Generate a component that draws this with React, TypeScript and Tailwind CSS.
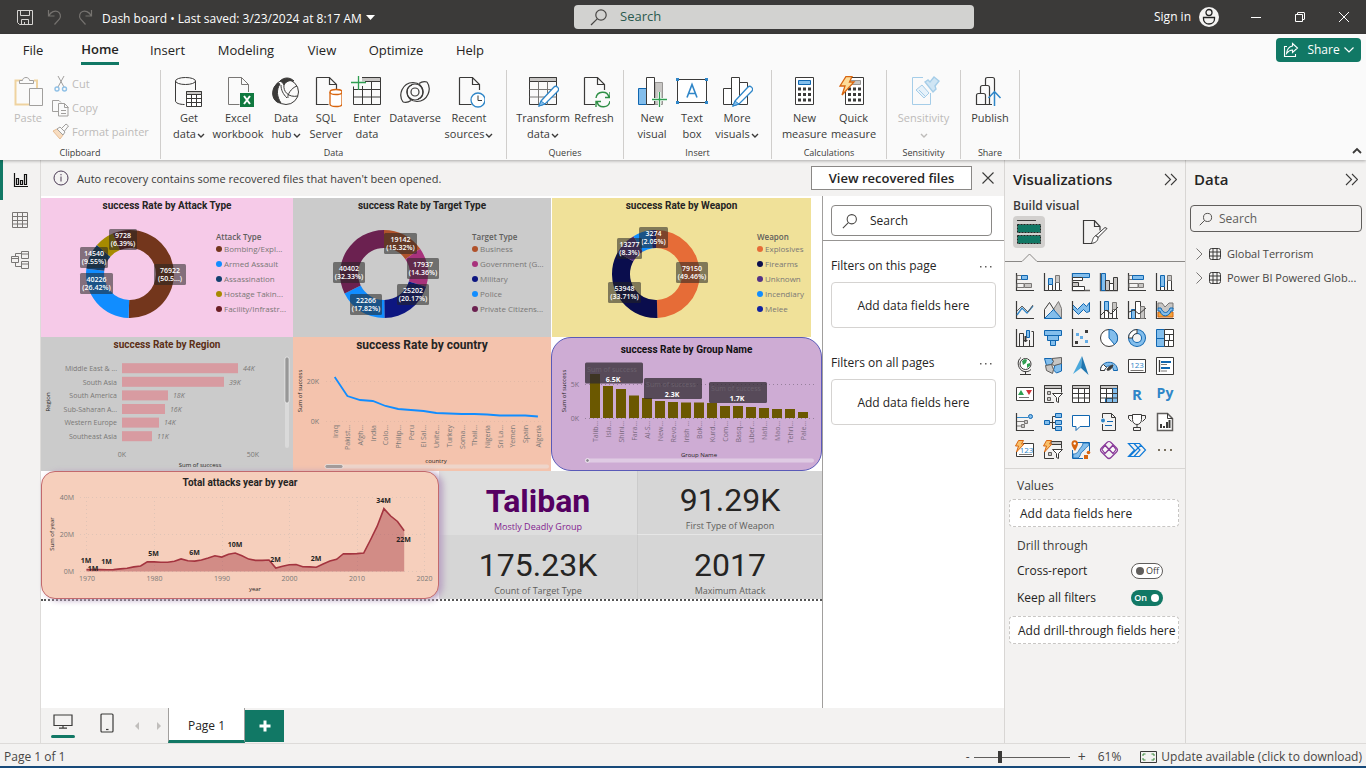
import React from "react";

type Node = React.ReactNode;

const K = "#3b3a39";
const B = "#1066b0";
const L = "#83beec";
const G = "#c8c6c4";
const TEAL = "#117865";

function Icon({ size = 20, box = 20, label, children }: { size?: number; box?: number; label?: string; children: Node }) {
  return (
    <svg width={size} height={size} viewBox={`0 0 ${box} ${box}`} fill="none" stroke={K} className="shrink-0" aria-label={label} aria-hidden={label ? undefined : true}>
      {children}
    </svg>
  );
}

function Magnifier({ size = 18 }: { size?: number }) {
  return (
    <svg width={size} height={size} viewBox="0 0 18 18" fill="none" stroke="#484644" strokeWidth="1.2" className="shrink-0" aria-hidden>
      <circle cx="11" cy="7" r="5.2" />
      <path d="M7.2 10.8L1 17" />
    </svg>
  );
}

function Chevron() {
  return (
    <svg width="8" height="8" viewBox="0 0 8 8" fill="none" stroke="currentColor" strokeWidth="1.4" className="ml-px inline" aria-hidden>
      <path d="M1 3l3 3 3-3" />
    </svg>
  );
}

/* ---------- title bar ---------- */

function TitleBar() {
  return (
    <header className="flex h-[34px] items-center bg-[#3b3a39] text-xs text-white">
      <div className="flex flex-[574_1_0%] items-center">
        <button aria-label="Save" className="mr-3 ml-4">
          <svg width="18" height="18" viewBox="0 0 18 18" fill="none" stroke="#d6d4d2">
            <path d="M1.5 2.5h15v14h-13l-2-2z M4.5 2.5v5h9v-5 M5.5 16.5v-5h7v5 M8.5 14v2" />
          </svg>
        </button>
        <button aria-label="Undo" className="mr-3">
          <svg width="18" height="18" viewBox="0 0 18 18" fill="none" stroke="#75726f" strokeWidth="1.2">
            <path d="M2.5 2v6h6 M3 7.5c2-4 6-5 8.5-4s4 4.500 2 7.5L8.5 16.5" />
          </svg>
        </button>
        <button aria-label="Redo" className="mr-2">
          <svg width="18" height="18" viewBox="0 0 18 18" fill="none" stroke="#75726f" strokeWidth="1.2">
            <path d="M15.5 2v6h-6 M15 7.5c-2-4-6-5-8.5-4s-4 4.5-2 7.5l5 5.5" />
          </svg>
        </button>
        <button className="flex items-center gap-1 pt-1 whitespace-nowrap">
          Dash board • Last saved: 3/23/2024 at 8:17 AM
          <svg width="9" height="5" viewBox="0 0 9 5" fill="#fff" className="mb-1" aria-hidden>
            <path d="M0 0h9L4.5 5z" />
          </svg>
        </button>
      </div>
      <label className="flex h-6 w-[400px] items-center gap-3 rounded-sm bg-[#d2d2d0] px-4">
        <Magnifier />
        <input aria-label="Search" placeholder="Search" className="min-w-0 flex-1 bg-transparent text-[13px] text-[#2a5a4e] outline-none placeholder:text-[#2a5a4e]" />
      </label>
      <div className="flex flex-[392_1_0%] items-center justify-end">
        <button className="flex items-center gap-2">
          Sign in
          <svg width="20" height="20" viewBox="0 0 20 20" aria-hidden>
            <circle cx="10" cy="10" r="10" fill="#f3f2f1" />
            <circle cx="10" cy="5.5" r="3" fill="none" stroke="#222" strokeWidth="1.3" />
            <path d="M4.5 10.5h11v1.5c0 3-2.500 5-5.5 5s-5.5-2-5.5-5z" fill="none" stroke="#222" strokeWidth="1.3" />
          </svg>
        </button>
        <button aria-label="Minimize" className="ml-8">
          <svg width="10" height="10" viewBox="0 0 10 10" stroke="#fff"><path d="M0 5.5h10" /></svg>
        </button>
        <button aria-label="Restore" className="ml-[34px]">
          <svg width="10" height="10" viewBox="0 0 10 10" stroke="#fff" fill="none"><path d="M.5 2.5h7v7h-7z M2.5 2.5V1q0-.5.5-.5h6q.5 0 .5.5v6q0 .5-.5.5H7.5" /></svg>
        </button>
        <button aria-label="Close" className="mr-[17px] ml-[34px]">
          <svg width="10" height="10" viewBox="0 0 10 10" stroke="#fff"><path d="M0 0l10 10 M10 0L0 10" /></svg>
        </button>
      </div>
    </header>
  );
}

/* ---------- ribbon ---------- */

function MenuTabs() {
  const tab = "flex h-[31px] items-center justify-center pt-0.5 text-[13px] text-[#252423]";
  return (
    <div className="flex h-9 items-start">
      <button className={`${tab} w-[66px]`}>File</button>
      <button className={`${tab} w-[68px] font-semibold`}>
        <span className="flex h-full items-center border-b-[3px] border-[#117865] pt-0.5">Home</span>
      </button>
      <button className={`${tab} w-[67px]`}>Insert</button>
      <button className={`${tab} w-[90px]`}>Modeling</button>
      <button className={`${tab} w-[62px]`}>View</button>
      <button className={`${tab} w-[86px]`}>Optimize</button>
      <button className={`${tab} w-[62px]`}>Help</button>
      <button className="mt-1 mr-[5px] ml-auto flex h-6 w-[85px] items-center justify-center gap-1 rounded bg-[#117865] text-xs text-white">
        <svg width="16" height="16" viewBox="0 0 16 16" fill="none" stroke="#fff" strokeWidth="1.1" className="mr-1" aria-hidden>
          <path d="M4 4.500H1.500v10h11V12" />
          <path d="M9.500 1.500l5 4.500-5 4.500V8C6.500 8 5 9.500 3.500 11.500 4 7 6.500 4.500 9.500 4z" />
        </svg>
        Share
        <svg width="10" height="6" viewBox="0 0 10 6" fill="none" stroke="#fff" strokeWidth="1.2" aria-hidden><path d="M.5.5L5 5 9.500.5" /></svg>
      </button>
    </div>
  );
}

const page = "M6.500 1.500h13l7 7V14 M19.500 1.500v7h7 M6.500 1.500v27h12";
const ribbonIcons: Record<string, Node> = {
  get: (
    <>
      <ellipse cx="12.500" cy="5" rx="10" ry="3.500" />
      <path d="M2.500 5v20c0 2 4 3.500 9 3.500 M22.500 5v9" />
      <path d="M13.500 15.500h15v15h-15z" fill="#fff" />
      <path d="M13.500 15.500h15v3h-15z" fill={G} />
      <path d="M13.500 22.500h15 M13.500 26.500h15 M18.500 18.500v12 M23.500 18.500v12" />
    </>
  ),
  excel: (
    <>
      <path d="M6.500 1.500h13l7 7V16 M19.500 1.500v7h7 M6.500 1.500v27h11" stroke="#797775" />
      <path d="M18 17h14v14H18z" fill="#10793f" stroke="none" />
      <path d="M22 20l6 8 M28 20l-6 8" stroke="#fff" strokeWidth="2" />
    </>
  ),
  hub: (
    <>
      <circle cx="16" cy="16" r="12.500" />
      <path d="M10 5c4-4 10-4 14 0-4-1-8 0-10 4-1-2-2-3-4-4z M8 7C1 12 1 22 7 26c2 1 3 1 4 1C7 21 6 14 10 8z" fill={K} />
      <path d="M14 9c-1 6 4 13 14 11 M27 10c-6 2-10 9-9 12 M11 9c0 5 2 9 6 13" />
    </>
  ),
  sql: (
    <>
      <path d={page} strokeWidth="1.2" />
      <path d="M20 16v12c0 1.500 3 2.500 6 2.500s6-1 6-2.500V16" fill="#fff" stroke="#d8650f" strokeWidth="1.300" />
      <ellipse cx="26" cy="16" rx="6" ry="2.500" fill="#fff" stroke="#d8650f" strokeWidth="1.300" />
    </>
  ),
  enter: (
    <>
      <path d="M11 1.500h18.500v4H11z" fill={G} stroke="none" />
      <path d="M11 1.500h18.500v27h-27V10.500 M14 5.500h15.500 M2.500 13.500h27 M2.500 21h27 M11.500 10v18.500 M20.500 5.500v23" />
      <path d="M7.500 0v14 M0 6.500h15" stroke="#2f9e51" strokeWidth="1.300" />
    </>
  ),
  dataverse: (
    <g strokeWidth="1.200">
      <circle cx="16" cy="16" r="4" />
      <path d="M4 26C-1 19 3 7 14 6.500c6 0 10 4 10 9.500 0 5-4 8-8 8-5 0-8-4-8-8 0-3 2-6 5-7" />
      <path d="M28 6C33 13 29 25 18 25.500c-6 0-10-4-10-9.500 0-5 4-8 8-8 5 0 8 4 8 8 0 3-2 6-5 7" />
      <path d="M4 26c3 1 6 0 8-1.500 M28 6c-3-1-6 0-8 1.500" />
    </g>
  ),
  recent: (
    <>
      <path d={page} strokeWidth="1.200" />
      <circle cx="25" cy="24" r="7" fill="#fff" stroke="#2f86c8" strokeWidth="1.300" />
      <path d="M25 19.500V24.500h4" />
    </>
  ),
  transform: (
    <>
      <path d="M2.500 1.500h27v27h-27z" />
      <path d="M2.500 1.500h27v4h-27z" fill={G} />
      <path d="M2.500 13.500h27 M2.500 21h27 M11.500 5.500v23 M20.500 5.500v23" stroke="#797775" />
      <path d="M14 25L27 11c2-2 6 1 4 4L18 28l-6 2z" fill="#fff" stroke="#2f86c8" strokeWidth="1.300" />
      <path d="M14 25l4 3-6 2z" fill={L} stroke="#2f86c8" />
    </>
  ),
  refresh: (
    <>
      <path d={page} strokeWidth="1.200" />
      <path d="M17 15h15v16H17z" fill="#fafafa" stroke="none" />
      <path d="M18 22c1-7 11-8 13-1 M32 16v5.500h-5 M32 25c-1 7-11 8-13 1 M18 31v-5.500h5" stroke="#2f8f46" strokeWidth="1.400" />
    </>
  ),
  newVisual: (
    <>
      <path d="M2.500 12.500h8v16h-8z" fill={L} stroke={B} />
      <path d="M19 6.500h7.500v22H19z" fill={G} stroke="#979593" />
      <path d="M10.500 1.500h8v27h-8z" fill="#fff" />
      <path d="M16 23.500h15 M23.500 16v15" stroke="#fff" strokeWidth="3" />
      <path d="M16 23.500h15 M23.500 16v15" stroke="#2f9e51" strokeWidth="1.300" />
    </>
  ),
  textBox: (
    <>
      <path d="M1.500 3.500h29v23h-29z" fill="#fff" />
      <path d="M11 21.500l5-13 5 13 M12.500 17.500h7" stroke="#2f86c8" strokeWidth="1.600" />
      <path d="M0 2h3v3H0z M29 2h3v3h-3z M0 25h3v3H0z M29 25h3v3h-3z" fill="#2f86c8" stroke="none" />
    </>
  ),
  moreVisuals: (
    <>
      <path d="M2.500 12.500h8v16h-8z M18.500 6.500h8v22h-8z M10.500 1.500h8v27h-8z" fill="#fff" />
      <path d="M14 25L27 11c2-2 6 1 4 4L18 28l-6 2z" fill="#fff" stroke="#2f86c8" strokeWidth="1.300" />
      <path d="M14 25l4 3-6 2z" fill={L} stroke="#2f86c8" />
    </>
  ),
  newMeasure: (
    <>
      <path d="M6.500 1.500h18v27h-18z" fill="#fff" />
      <path d="M9.500 4.500h12v4h-12z" fill={L} stroke={B} />
      <path d="M9 13h13 M9 18.500h13 M9 24h13" strokeWidth="3" strokeDasharray="3 2" />
    </>
  ),
  quickMeasure: (
    <>
      <path d="M7.500 1.500h18v27h-18z" fill="#fff" />
      <path d="M12.500 4.500h10v4h-10z" fill={G} stroke="#979593" />
      <path d="M10 13h13 M10 18.500h13 M10 24h13" strokeWidth="3" strokeDasharray="3 2" />
      <path d="M8 .5h6L11.500 6H16L4 19l3-9H2z" fill="#fddc9a" stroke="#d8650f" strokeWidth="1.300" />
    </>
  ),
  sensitivity: (
    <g stroke="#a5cde8">
      <path d="M15 1.500H4.500v27h18V17" />
      <path d="M8 14l6-5 7 8-5 5z M11 14l6 6" fill="#e7f2fa" />
      <path d="M17 6l3-2 2 2 4-5 5 4-4 5 1 3-3 3z" fill="#cfe5f4" strokeWidth="1.400" />
    </g>
  ),
  publish: (
    <>
      <path d="M11.500 10V3.500q0-2 2-2h5q2 0 2 2V15 M6.500 17.500v-6q0-2 2-2h5q2 0 2 2V28.500 M18 28.500H2.500v-9q0-2 2-2h5q2 0 2 2v9" strokeWidth="1.200" />
      <path d="M20.500 30V16 M14.500 22l6-6.500 6 6.500" stroke="#2f86c8" strokeWidth="1.500" />
    </>
  ),
};

function RibbonButton({ icon, lines, arrow, width, muted }: { icon: string; lines: string[]; arrow?: boolean; width: string; muted?: boolean }) {
  return (
    <button className={`flex flex-col items-center text-[11px] leading-4 whitespace-nowrap ${width} ${muted ? "text-[#bdbbb9]" : "text-[#3b3a39]"}`}>
      <span className="mb-0.5 block">
        <Icon size={32} box={32}>{ribbonIcons[icon]}</Icon>
      </span>
      {lines.map((line, i) => (
        <span key={i}>
          {line}
          {arrow && i === lines.length - 1 && <Chevron />}
        </span>
      ))}
    </button>
  );
}

function Group({ name, children, width, inset = "pl-2" }: { name: string; children: Node; width: string; inset?: string }) {
  return (
    <section className={`flex h-[89px] flex-col border-r border-[#d0cecc] ${width}`} aria-label={name}>
      <div className={`flex flex-1 pt-1.5 ${inset}`}>{children}</div>
      <div className="text-center text-[9px] leading-[12px] text-[#3b3a39]">{name}</div>
    </section>
  );
}

function Ribbon() {
  return (
    <div className="flex h-[90px] items-start text-[#3b3a39]">
      <Group name="Clipboard" width="w-[161px]" inset="pl-1">
        <button className="flex w-12 flex-col items-center text-[11px] leading-4 text-[#bdbbb9]">
          <span className="mb-0.5">
            <svg width="32" height="32" viewBox="0 0 32 32" fill="none" aria-hidden>
              <path d="M10 4.500H3.500v24H17 M22 4.500h3V12" stroke="#efd3a0" strokeWidth="2" />
              <path d="M7.500 7.500v-3h3c0-4 7-4 7 0h4v3z" stroke="#a19f9d" fill="#fafafa" />
              <path d="M17.500 12.500h13v17h-13z" stroke="#a19f9d" fill="#fafafa" />
            </svg>
          </span>
          Paste
        </button>
        <div className="-mt-1 flex flex-1 flex-col items-start text-[11px] text-[#bdbbb9]">
          <button className="flex h-6 items-center gap-0.5">
            <svg width="18" height="18" viewBox="0 0 18 18" fill="none" stroke="#a19f9d" aria-hidden>
              <path d="M6 1l6 11 M12 1L6 12" />
              <circle cx="5" cy="14" r="2" stroke="#8fc0e6" strokeWidth="1.400" />
              <circle cx="12.500" cy="14" r="2" stroke="#8fc0e6" strokeWidth="1.400" />
            </svg>
            Cut
          </button>
          <button className="flex h-6 items-center gap-0.5">
            <svg width="18" height="18" viewBox="0 0 18 18" fill="none" stroke="#a19f9d" aria-hidden>
              <path d="M6 12.500H.5V1.500H7l2 2" />
              <path d="M6.500 4.500h6l3.500 3.500v9H6.500z M12.500 4.500v4h4 M9 11.500h5 M9 14.500h5" />
            </svg>
            Copy
          </button>
          <button className="flex h-6 items-center gap-0.5 whitespace-nowrap">
            <svg width="18" height="18" viewBox="0 0 18 18" fill="none" stroke="#a19f9d" aria-hidden>
              <path d="M1 8l4-2 6 6-3 4z" fill="#f7dcc0" stroke="#e8bd93" />
              <path d="M5 6l3-2 5 5-2 3z M10 5l4-4 2.500 2-4 5" />
            </svg>
            Format painter
          </button>
        </div>
      </Group>
      <Group name="Data" width="w-[346px]">
        <RibbonButton icon="get" lines={["Get", "data"]} arrow width="w-10" />
        <RibbonButton icon="excel" lines={["Excel", "workbook"]} width="w-[58px]" />
        <RibbonButton icon="hub" lines={["Data", "hub"]} arrow width="w-[38px]" />
        <RibbonButton icon="sql" lines={["SQL", "Server"]} width="w-[42px]" />
        <RibbonButton icon="enter" lines={["Enter", "data"]} width="w-10" />
        <RibbonButton icon="dataverse" lines={["Dataverse"]} width="w-14" />
        <RibbonButton icon="recent" lines={["Recent", "sources"]} arrow width="w-[52px]" />
      </Group>
      <Group name="Queries" width="w-[117px]">
        <RibbonButton icon="transform" lines={["Transform", "data"]} arrow width="w-14" />
        <RibbonButton icon="refresh" lines={["Refresh"]} width="w-[46px]" />
      </Group>
      <Group name="Insert" width="w-[148px]">
        <RibbonButton icon="newVisual" lines={["New", "visual"]} width="w-10" />
        <RibbonButton icon="textBox" lines={["Text", "box"]} width="w-10" />
        <RibbonButton icon="moreVisuals" lines={["More", "visuals"]} arrow width="w-[50px]" />
      </Group>
      <Group name="Calculations" width="w-[115px]">
        <RibbonButton icon="newMeasure" lines={["New", "measure"]} width="w-[49px]" />
        <RibbonButton icon="quickMeasure" lines={["Quick", "measure"]} width="w-[49px]" />
      </Group>
      <Group name="Sensitivity" width="w-[74px]" inset="pl-0">
        <RibbonButton icon="sensitivity" lines={["Sensitivity", ""]} arrow muted width="w-full" />
      </Group>
      <Group name="Share" width="w-[59px]" inset="pl-0">
        <RibbonButton icon="publish" lines={["Publish"]} width="w-full" />
      </Group>
      <button aria-label="Collapse ribbon" className="mr-1 mb-1 ml-auto self-end">
        <svg width="10" height="10" viewBox="0 0 10 10" fill="none" stroke={K} strokeWidth="1.800"><path d="M1 7l4-4 4 4" /></svg>
      </button>
    </div>
  );
}

/* ---------- left rail ---------- */

function Rail() {
  return (
    <nav className="flex w-[41px] shrink-0 flex-col border-r border-[#dddbd9]" aria-label="Views">
      <button aria-label="Report view" className="flex h-10 items-center justify-center border-l-[3px] border-[#117865] pr-px">
        <svg width="16" height="16" viewBox="0 0 16 16" fill="none" stroke="#111" strokeWidth="1.200">
          <path d="M1.500 1v13.500H15 M3.500 6.500h2v6h-2z M7.500 8.500h2v4h-2z M11.500 2.500h2v10h-2z" />
        </svg>
      </button>
      <button aria-label="Table view" className="flex h-10 items-center justify-center">
        <svg width="18" height="18" viewBox="0 0 18 18" fill="none" stroke="#797775">
          <path d="M1.500 1.500h15v15h-15z M1.500 5.500h15 M1.500 9.500h15 M1.500 13h15 M6.500 1.500v15 M11.500 1.500v15" />
        </svg>
      </button>
      <button aria-label="Model view" className="flex h-10 items-center justify-center">
        <svg width="20" height="20" viewBox="0 0 20 20" fill="none" stroke="#797775">
          <path d="M1.500 6.500h7v6h-7z M1.500 8.500h7 M11.500 1.500h7v7h-7z M11.500 4h7 M11.500 11.500h7v7h-7z M11.500 14h7 M5.500 6.500V3.500h6 M5.500 12.500v4h6" />
        </svg>
      </button>
    </nav>
  );
}

/* ---------- charts ---------- */

type Slice = { value: number; color: string };
type Tag = { x: number; y: number; w: number; value: string; pct: string };

function arc(cx: number, cy: number, r1: number, r0: number, a0: number, a1: number) {
  const p = (r: number, a: number) => `${(cx + r * Math.sin(a)).toFixed(2)} ${(cy - r * Math.cos(a)).toFixed(2)}`;
  const big = a1 - a0 > Math.PI ? 1 : 0;
  return `M${p(r1, a0)}A${r1} ${r1} 0 ${big} 1 ${p(r1, a1)}L${p(r0, a1)}A${r0} ${r0} 0 ${big} 0 ${p(r0, a0)}Z`;
}

function Donut({ title, bg, view, cx, cy, slices, tags, legend, names, legendWidth }: {
  title: string; bg: string; view: string; cx: number; cy: number; slices: Slice[]; tags: Tag[]; legend: string; names: string[]; legendWidth: string;
}) {
  const total = slices.reduce((s, d) => s + d.value, 0);
  let angle = 0;
  return (
    <section className={bg}>
      <h3 className="h-[14px] text-center font-['Roboto'] text-[10px] leading-[15px] font-bold text-[#252423]">{title}</h3>
      <div className="flex">
        <svg viewBox={view} className="min-w-0 flex-1" role="img" aria-label={title}>
          {slices.map((s, i) => {
            const a0 = angle;
            angle += (s.value / total) * Math.PI * 2;
            return <path key={i} d={arc(cx, cy, 44, 26, a0, angle)} fill={s.color} />;
          })}
          {tags.map((t) => (
            <g key={t.value} fontSize="7" fontWeight="600" fill="#fff" textAnchor="middle">
              <rect x={t.x} y={t.y} width={t.w} height="21" rx="1.500" fill="#252423" fillOpacity=".55" />
              <text x={t.x + t.w / 2} y={t.y + 9}>{t.value}</text>
              <text x={t.x + t.w / 2} y={t.y + 17}>{t.pct}</text>
            </g>
          ))}
        </svg>
        <div className={`shrink-0 pt-5 text-[8px] whitespace-nowrap text-[#7a7876] ${legendWidth}`}>
          <div className="h-[9px] leading-[9px] font-semibold text-[#605e5c]">{legend}</div>
          <ul>
            {names.map((n, i) => (
              <li key={n} className="flex h-[15px] items-center gap-0.5">
                <svg width="6" height="6" viewBox="0 0 6 6" aria-hidden><circle cx="3" cy="3" r="3" fill={slices[i].color} /></svg>
                {n}
              </li>
            ))}
          </ul>
        </div>
      </div>
    </section>
  );
}

function RegionChart() {
  const rows: [string, number, string][] = [
    ["Middle East & ...", 116, "44K"], ["South Asia", 102, "39K"], ["South America", 46, "18K"],
    ["Sub-Saharan A...", 43, "16K"], ["Western Europe", 37, "14K"], ["Southeast Asia", 30, "11K"],
  ];
  return (
    <section className="bg-[#cbcbcb]">
      <h3 className="h-[14px] text-center font-['Roboto'] text-[10px] leading-[15px] font-bold text-[#5c2f16]">success Rate by Region</h3>
      <svg viewBox="41 351 252 120" className="w-full" fontSize="7" fill="#7a7876" role="img" aria-label="success Rate by Region">
        {rows.map(([name, w, v], i) => (
          <g key={name}>
            <text x="117" y={371 + i * 13.6} textAnchor="end">{name}</text>
            <rect x="122" y={363.2 + i * 13.6} width={w} height="10" fill="#d89ba1" />
            <text x={127 + w} y={371 + i * 13.6} fontStyle="italic">{v}</text>
          </g>
        ))}
        <text x="122" y="457" textAnchor="middle">0K</text>
        <text x="253" y="457" textAnchor="middle">50K</text>
        <text x="200" y="467" textAnchor="middle" fontSize="6" fill="#252423">Sum of success</text>
        <text transform="translate(50 402) rotate(-90)" textAnchor="middle" fontSize="6" fill="#252423">Region</text>
        <rect x="285" y="357" width="4" height="91" rx="2" fill="#dadada" />
        <rect x="285" y="357" width="4" height="46" rx="2" fill="#979797" stroke="#fff" strokeWidth=".5" />
      </svg>
    </section>
  );
}

function CountryChart() {
  const names = ["Iraq", "Pakist...", "Afgh...", "India", "Colo...", "Philip...", "Peru", "El Sal...", "Unite...", "Turkey", "Soma...", "Thail...", "Nigeria", "Sri La...", "Yemen", "Spain", "Algeria"];
  const ys = [377, 396, 400, 401, 406, 409, 410, 411, 413, 413.5, 414, 414, 414.5, 415.5, 415.5, 415.5, 416.5];
  return (
    <section className="bg-[#f4c3ad]">
      <h3 className="h-4 text-center font-['Roboto'] text-[12px] leading-4 font-bold text-[#252423]">success Rate by country</h3>
      <svg viewBox="293 353 258 118" className="w-full" fontSize="7" fill="#7a7876" role="img" aria-label="success Rate by country">
        <path d="M326 381.500h218 M326 421.500h218" stroke="#e3b9a6" strokeDasharray="1 3" />
        <text x="319" y="384" textAnchor="end">20K</text>
        <text x="319" y="424" textAnchor="end">0K</text>
        <polyline points={ys.map((y, i) => `${(334.7 + i * 12.7).toFixed(1)},${y}`).join(" ")} fill="none" stroke="#118dff" strokeWidth="1.800" />
        {names.map((n, i) => (
          <text key={n} transform={`translate(${337.5 + i * 12.7} 425) rotate(-90)`} textAnchor="end">{n}</text>
        ))}
        <text x="436" y="463" textAnchor="middle" fontSize="6" fill="#252423">country</text>
        <text transform="translate(302 391) rotate(-90)" textAnchor="middle" fontSize="6" fill="#252423">Sum of success</text>
        <rect x="325" y="464.500" width="224" height="4" rx="2" fill="#eed5ca" />
        <rect x="325" y="464.500" width="18" height="4" rx="2" fill="#a39b98" stroke="#fff" strokeWidth=".5" />
      </svg>
    </section>
  );
}

function GroupChart() {
  const names = ["Talib...", "Isla...", "Shini...", "Fara...", "Al-S...", "New...", "Revo...", "Irish ...", "Bok...", "Kurd...", "Com...", "Basq...", "Liber...", "Nati...", "Mao...", "Tehri...", "Pale..."];
  const tops = [374, 386, 389, 395.5, 398, 401, 402, 402.5, 402.5, 403, 406, 406, 407, 408, 409, 409, 412];
  const tags: [number, number, string][] = [[585, 362.5, "6.5K"], [644, 378, "2.3K"], [709, 382, "1.7K"]];
  return (
    <section className="rounded-[20px] border border-[#5a5ab8] bg-[#ceacd4]">
      <h3 className="h-5 pt-1 text-center font-['Roboto'] text-[10px] leading-4 font-bold text-[#111]">success Rate by Group Name</h3>
      <svg viewBox="552 358 269 112" className="w-full" fontSize="7" fill="#7b6a80" role="img" aria-label="success Rate by Group Name">
        <path d="M585 384.500h229 M585 418.500h229" stroke="#96809c" strokeDasharray="1 3" />
        <text x="579" y="387" textAnchor="end">5K</text>
        <text x="579" y="421" textAnchor="end">0K</text>
        {tops.map((y, i) => (
          <g key={i}>
            <rect x={590 + i * 13} y={y} width="10" height={418 - y} fill="#6b5800" />
            <text transform={`translate(${597.5 + i * 13} 421) rotate(-90)`} textAnchor="end">{names[i]}</text>
          </g>
        ))}
        {tags.map(([x, y, v]) => (
          <g key={v} textAnchor="middle">
            <rect x={x} y={y} width="58" height="21" rx="1.500" fill="#2f2a30" fillOpacity=".75" />
            <text x={x + 27} y={y + 9} fill="#6b616d">Sum of success</text>
            <text x={x + 28} y={y + 19} fill="#fff" fontWeight="700">{v}</text>
          </g>
        ))}
        <text x="699" y="457" textAnchor="middle" fontSize="6" fill="#252423">Group Name</text>
        <text transform="translate(566 391) rotate(-90)" textAnchor="middle" fontSize="6" fill="#252423">Sum of success</text>
        <rect x="585" y="458.500" width="229" height="4" rx="2" fill="#dfcbe3" />
        <circle cx="587.500" cy="460.500" r="1.800" fill="#8b8590" stroke="#fff" strokeWidth=".7" />
      </svg>
    </section>
  );
}

function YearChart() {
  const m = [1, 1, 1, 0.9, 1, 1.4, 1.8, 2.5, 3, 5.2, 5.2, 5, 5, 5.5, 6.8, 5.8, 5.6, 6.2, 7.3, 8.5, 7.8, 9.3, 10, 8.5, 6.7, 6, 6, 6.2, 1.9, 2.8, 3.6, 3.8, 2.6, 2.5, 2.3, 4, 5.6, 6.6, 9.6, 9.5, 9.7, 10, 17, 24.5, 34, 30, 27, 22];
  const pts = m.map((v, i) => `${(86.5 + i * 6.76).toFixed(1)},${(571.5 - v * 1.85).toFixed(1)}`);
  const marks: [number, number, string][] = [[86, 563, "1M"], [93, 571, "1M"], [106.5, 564, "1M"], [153.5, 556, "5M"], [194.5, 555, "6M"], [235, 547, "10M"], [275.5, 562, "2M"], [316, 561, "2M"], [383.5, 503, "34M"], [403.5, 542, "22M"]];
  return (
    <section className="relative z-10 rounded-[14px] border border-[#c2696d] bg-[#f6cfbc] shadow-[4px_1px_6px_#b9a3c2]">
      <h3 className="h-[22px] text-center font-['Roboto'] text-[10px] leading-[22px] font-bold text-[#252423]">Total attacks year by year</h3>
      <svg viewBox="42 494 396 104" className="w-full" fontSize="7" fill="#7a7876" role="img" aria-label="Total attacks year by year">
        <path d="M80 497.500h345 M80 534.500h345 M80 571.500h345 M86.500 497v75 M154.500 497v75 M222.500 497v75 M289.500 497v75 M357.500 497v75 M424.500 497v75" stroke="#e0c4b6" strokeDasharray="1 3" />
        <polygon points={`86.5,571.5 ${pts.join(" ")} 404.2,571.5`} fill="#a63a44" fillOpacity=".45" />
        <polyline points={pts.join(" ")} fill="none" stroke="#a4343f" strokeWidth="1.600" />
        {["40M", "20M", "0M"].map((t, i) => <text key={t} x="74" y={500 + i * 37} textAnchor="end">{t}</text>)}
        {["1970", "1980", "1990", "2000", "2010", "2020"].map((t, i) => <text key={t} x={87 + i * 67.5} y="581" textAnchor="middle">{t}</text>)}
        {marks.map(([x, y, t], i) => <text key={i} x={x} y={y} textAnchor="middle" fontWeight="700" fill="#252423">{t}</text>)}
        <text x="255" y="591" textAnchor="middle" fontSize="6" fill="#252423">year</text>
        <text transform="translate(54 534) rotate(-90)" textAnchor="middle" fontSize="6" fill="#252423">Sum of year</text>
      </svg>
    </section>
  );
}

function Kpi({ value, label, accent, className }: { value: string; label: string; accent?: boolean; className: string }) {
  return (
    <div className={`flex h-16 flex-col items-center justify-end pb-px ${className}`}>
      <div className={`font-['Roboto'] text-[32px] leading-[38px] ${accent ? "font-bold text-[#550061]" : "text-[#252423]"}`}>{value}</div>
      <div className={`text-[9px] leading-[14px] ${accent ? "text-[#82238f]" : "text-[#605e5c]"}`}>{label}</div>
    </div>
  );
}

function Canvas() {
  return (
    <main className="min-w-0 flex-1 bg-white pt-0.5">
      <div className="grid grid-cols-[252fr_258fr_271fr]">
        <Donut
          title="success Rate by Attack Type" bg="bg-[#f6cae8]" view="41 212 175 125" cx={130} cy={274}
          slices={[{ value: 50.5, color: "#73361c" }, { value: 26.42, color: "#118dff" }, { value: 9.55, color: "#12406f" }, { value: 7.14, color: "#a68a00" }, { value: 6.39, color: "#6b1e24" }]}
          tags={[{ x: 109, y: 229, w: 28, value: "9728", pct: "(6.39%)" }, { x: 80, y: 247, w: 28, value: "14540", pct: "(9.55%)" }, { x: 80, y: 273, w: 33, value: "40226", pct: "(26.42%)" }, { x: 154, y: 264, w: 32, value: "76922", pct: "(50.5...)" }]}
          legend="Attack Type" names={["Bombing/Expl...", "Armed Assault", "Assassination", "Hostage Takin...", "Facility/Infrastr..."]} legendWidth="w-[77px]"
        />
        <Donut
          title="success Rate by Target Type" bg="bg-[#cbcbcb]" view="293 212 179 125" cx={384} cy={274}
          slices={[{ value: 15.32, color: "#b0522b" }, { value: 14.36, color: "#a8327c" }, { value: 20.17, color: "#0d1680" }, { value: 17.82, color: "#118dff" }, { value: 32.33, color: "#6b2150" }]}
          tags={[{ x: 384, y: 233, w: 33, value: "19142", pct: "(15.32%)" }, { x: 407, y: 258, w: 32, value: "17937", pct: "(14.36%)" }, { x: 397, y: 284, w: 32, value: "25202", pct: "(20.17%)" }, { x: 350, y: 294, w: 32, value: "22266", pct: "(17.82%)" }, { x: 333, y: 262, w: 32, value: "40402", pct: "(32.33%)" }]}
          legend="Target Type" names={["Business", "Government (G...", "Military", "Police", "Private Citizens..."]} legendWidth="w-[79px]"
        />
        <Donut
          title="success Rate by Weapon" bg="mr-[11px] ml-px bg-[#f0e199]" view="552 212 205 125" cx={656} cy={274}
          slices={[{ value: 49.46, color: "#e66c37" }, { value: 33.71, color: "#0a0d4d" }, { value: 8.3, color: "#533285" }, { value: 6.48, color: "#118dff" }, { value: 2.05, color: "#12239e" }]}
          tags={[{ x: 639, y: 227, w: 29, value: "3274", pct: "(2.05%)" }, { x: 617, y: 238, w: 25, value: "13277", pct: "(8.3%)" }, { x: 608, y: 282, w: 33, value: "53948", pct: "(33.71%)" }, { x: 676, y: 262, w: 32, value: "79150", pct: "(49.46%)" }]}
          legend="Weapon" names={["Explosives", "Firearms", "Unknown", "Incendiary", "Melee"]} legendWidth="w-[54px]"
        />
        <RegionChart />
        <CountryChart />
        <GroupChart />
      </div>
      <div className="grid grid-cols-[398fr_383fr] border-b-2 border-dotted border-[#555]">
        <YearChart />
        <div className="grid grid-cols-[198fr_185fr]">
          <Kpi value="Taliban" label="Mostly Deadly Group" accent className="bg-[#dedede]" />
          <Kpi value="91.29K" label="First Type of Weapon" className="border-b border-l border-b-[#e6e6e6] border-l-[#cbcbcb] bg-[#d6d6d6]" />
          <Kpi value="175.23K" label="Count of Target Type" className="bg-[#d6d6d6]" />
          <Kpi value="2017" label="Maximum Attack" className="border-l border-[#cbcbcb] bg-[#d6d6d6]" />
        </div>
      </div>
    </main>
  );
}

/* ---------- filters ---------- */

function FilterGroup({ title }: { title: string }) {
  return (
    <section className="px-2">
      <div className="flex h-8 items-center justify-between pr-1 text-xs text-[#252423]">
        <h3>{title}</h3>
        <button aria-label={`${title} options`}>
          <svg width="12" height="3" viewBox="0 0 12 3" fill="#605e5c"><path d="M0 1h1.500v1.500H0z M5 1h1.500v1.500H5z M10 1h1.500v1.500H10z" /></svg>
        </button>
      </div>
      <button className="flex h-[46px] w-full items-center justify-center rounded-sm border border-[#d5d3d1] pt-0.5 text-xs text-[#252423]">Add data fields here</button>
    </section>
  );
}

function Filters() {
  return (
    <aside className="flex w-[182px] shrink-0 flex-col border-l border-[#a19f9d] bg-white" aria-label="Filters">
      <div className="border-b border-[#979593] pt-[9px] pr-3 pb-1 pl-2">
        <label className="flex h-[31px] items-center gap-3 rounded-sm border border-[#8a8886] px-2.5">
          <Magnifier size={16} />
          <input aria-label="Search filters" placeholder="Search" className="min-w-0 flex-1 text-xs outline-none placeholder:text-[#252423]" />
        </label>
      </div>
      <div className="mt-[9px] flex flex-col gap-[19px]">
        <FilterGroup title="Filters on this page" />
        <FilterGroup title="Filters on all pages" />
      </div>
    </aside>
  );
}

/* ---------- visualizations ---------- */

const axes = <path d="M1.500 1v17.500H19" strokeWidth="1.200" />;
const bolt = <path d="M3.500.5h5L6.500 4H9L1.500 12l2-6H.5z" fill="#f8bf6a" stroke="#d8650f" />;

const visualIcons: [string, Node][] = [
  ["Stacked bar chart", <>{axes}<path d="M2 3.500h4.500v4H2z M2 11.500h7v4H2z" stroke="#797775" /><path d="M6.500 3.500h6v4h-6z" fill={L} stroke={B} /><path d="M9.500 11.500h7v4h-7z" fill={G} stroke="#797775" /></>],
  ["Stacked column chart", <>{axes}<path d="M5.500 12.500h4v6h-4z M12.500 10.500h4v8h-4z" fill="#fff" /><path d="M5.500 6.500h4v6h-4z" fill={L} stroke={B} /><path d="M12.500 3.500h4v7h-4z" fill={G} stroke="#797775" /></>],
  ["Clustered bar chart", <><path d="M1.500 1v17.500H19" stroke="#605e5c" strokeWidth="1.400" /><path d="M1.500 1.500h17v4h-17z" fill={L} stroke={B} /><path d="M1.500 5.500h10v3h-10z M1.500 14.500h12v4h-12z" fill="#fff" /><path d="M1.500 10.500h6v4h-6z" fill={G} /></>],
  ["Clustered column chart", <><path d="M1.500 1v17.500H19" stroke="#605e5c" strokeWidth="1.400" /><path d="M2.500 1.500h4v17h-4z" fill={L} stroke={B} /><path d="M6.500 8.500h4v10h-4z M14.500 5.500h4v13h-4z" fill={G} /><path d="M10.500 11.500h4v7h-4z" fill="#fff" /></>],
  ["100% stacked bar chart", <>{axes}<path d="M2 3.500h4.500v4H2z M2 11.500h9v4H2z" stroke="#797775" /><path d="M5.500 3.500h11v4h-11z" fill={L} stroke={B} /><path d="M11.500 11.500h5v4h-5z" fill={G} stroke="#797775" /></>],
  ["100% stacked column chart", <>{axes}<path d="M5.500 14.500h4v4h-4z M12.500 8.500h4v10h-4z" fill="#fff" /><path d="M5.500 3.500h4v11h-4z" fill={L} stroke={B} /><path d="M12.500 3.500h4v5h-4z" fill={G} stroke="#797775" /></>],
  ["Line chart", <>{axes}<path d="M2 15l5-7 5 5 6-7" stroke="#2f86c8" strokeWidth="1.300" /><path d="M2 11l5-5 6 6 5-7" stroke="#605e5c" /></>],
  ["Area chart", <><path d="M10 10l5.500-8.500 3 7v10" fill={G} stroke="#797775" /><path d="M1.500 18.500v-9l5-7 5 8" /><path d="M1.500 18.500l6-6 3-3 8 9z" fill={L} stroke={B} /></>],
  ["Stacked area chart", <><path d="M1.500 4.500l5 5 6-6 3 3 3-4v9l-3 1-3-3-5 5-6-6z" fill={L} stroke={B} /><path d="M1.500 1v17.500H19" strokeWidth="1.200" /></>],
  ["Line and stacked column chart", <>{axes}<path d="M5.500 1.500h4v9h-4z" fill={L} stroke={B} /><path d="M5.500 10.500h4v8h-4z M13.500 8.500h4v10h-4z" fill="#fff" /><path d="M13.500 2.500h4v7h-4z" fill={G} stroke="#797775" /><path d="M2 15l5-5 5 4 7-7" /></>],
  ["Line and clustered column chart", <>{axes}<path d="M4.500 9.500h4v9h-4z" fill={L} stroke={B} /><path d="M8.500 1.500h5v17h-5z" fill="#fff" /><path d="M13.500 6.500h4v12h-4z" fill={G} stroke="#797775" /><path d="M2 12l5-2 5 4 7-6" /></>],
  ["Ribbon chart", <>{axes}<path d="M3 3h4l3 4 4-4h4v6l-4 3-4 2-4-2-3-4z" fill={G} stroke="#797775" /><path d="M3 12h3l4 4 4-4h4v5H3z" fill="#f2a33c" stroke="#d8650f" /><path d="M3 8h3c2 6 7 6 9 0h3v3h-2c-2 6-9 7-11 0H3z" fill={L} stroke={B} /></>],
  ["Waterfall chart", <>{axes}<path d="M4.500 5.500h4v13 M4.500 5.500v13 M8.500 12.500h4 M16.500 3.500h2v15 M14.500 12v6.500" /><path d="M11.500 2.500h3v7h-3z" fill={L} stroke={B} /><path d="M10.500 8v6" strokeWidth="2" /></>],
  ["Funnel chart", <g fill={L} stroke={B}><path d="M1.500 2.500h17v5h-17z M4.500 7.500h11v5h-11z M7.500 12.500h5v5h-5z" /></g>],
  ["Scatter chart", <>{axes}<g stroke="none"><path d="M14 2h3v3h-3z M4 13h3v3H4z" fill={K} /><path d="M5 5h3v3H5z M9 8h3v3H9z M14 12h3v3h-3z" fill="#65aee6" /></g></>],
  ["Pie chart", <><circle cx="10" cy="10" r="8.500" fill="#fff" /><path d="M10 1.500v8.500l5.500 6.500A8.500 8.500 0 0 0 10 1.500z" fill={L} stroke={B} /></>],
  ["Donut chart", <><circle cx="10" cy="10" r="6.500" stroke={B} strokeWidth="5" /><circle cx="10" cy="10" r="6.500" stroke={L} strokeWidth="3" /><path d="M1.500 10A8.500 8.500 0 0 1 10 1.500v4A4.500 4.500 0 0 0 5.500 10z" fill="#fff" /></>],
  ["Treemap", <><path d="M1.500 1.500h8v17h-8z" fill={L} stroke={B} /><path d="M1.500 10.500h8" stroke={B} /><path d="M9.500 1.500h9v17h-9z" fill="#fff" /><path d="M9.500 6.500h9 M9.500 12.500h9 M13.500 12.500v6 M14.500 6.500v6" /></>],
  ["Map", <><circle cx="10.500" cy="8" r="5.500" fill="#fff" /><path d="M7 5l3-2 2 1-1 3-3 2z M12 8l3-1v3l-3 2z" fill="#2f9e51" stroke="none" /><path d="M6 1.500C1 5 3 14 9 15.500c3 .5 5 0 7-2 M10.500 15.500v3 M5 18.500h11" /></>],
  ["Filled map", <><path d="M1.500 2.500h7l2 3-2 3-5 1z M12 9l6.500-2v8l-5 2-3-3z" fill={L} stroke={B} /><path d="M9 2.500l9.500-1v6l-7 2-3-1 2-3z M2.500 9.500l6-1 2 5-1 4-6-3z" fill={G} stroke="#605e5c" /></>],
  ["Azure map", <g stroke="none"><path d="M11 0L2 18l8-6z" fill="#4ba9dc" /><path d="M11 0l6.500 19L10 12z" fill="#2077b0" /></g>],
  ["Gauge", <><path d="M1.500 14.500c0-11 17-11 17 0h-4c0-6-9-6-9 0z" fill={L} stroke={B} /><path d="M1.500 14.500c0-3 1-5 3-6l3 3c-1 1-2 2-2 3z" fill="#fff" /><path d="M8 14c0-2 4-5 6-5-1 3-3 6-6 5z" fill={K} /></>],
  ["Card", <><path d="M1.500 3.500h17v13h-17z" fill="#fff" /><path d="M3.500 14.500h13" stroke="#797775" /><text x="10" y="12" textAnchor="middle" fontSize="8" stroke="none" fill="#2f86c8">123</text></>],
  ["Multi-row card", <><path d="M1.500 1.500h17v17h-17z" fill="#fff" /><path d="M4.500 4v12" strokeWidth="1.300" /><path d="M6 6h10 M6 12h9" stroke={B} strokeWidth="2" /><path d="M6 8.500h6 M6 15h6" stroke="#797775" /></>],
  ["KPI", <><path d="M1.500 3.500h17v13h-17z" fill="#fff" /><path d="M3 11l3-5 3 5z" fill="#2f9e51" stroke="none" /><path d="M11 6h6l-3 5z" fill="#d13438" stroke="none" /><path d="M4 13.500h10" stroke="#797775" /></>],
  ["Slicer", <><path d="M11 18.500H1.500v-17h17v7" /><path d="M1.500 1.500h17v3h-17z" fill={G} /><path d="M4.500 7.500h3v3h-3z M4.500 13.500h3v3h-3z" fill={G} stroke="#605e5c" /><path d="M9.500 9.500h10l-4 4v5l-2-1v-4z" fill="#fff" /></>],
  ["Table", <><path d="M1.500 1.500h17v17h-17z" fill="#fff" /><path d="M1.500 1.500h17v3h-17z" fill={G} /><path d="M1.500 9.500h17 M1.500 14h17 M7.500 4.500v14 M13.500 4.500v14" /></>],
  ["Matrix", <><path d="M1.500 1.500h17v17h-17z" fill="#fff" /><path d="M1.500 1.500h17v3h-17z" fill={G} /><path d="M13.500 4.500h5v14h-12v-4h7z" fill={L} stroke={B} /><path d="M1.500 9.500h17 M1.500 14h17 M7.500 4.500v14 M13.500 4.500v14 M1.500 1.500h17v17h-17z" /></>],
  ["R script visual", <text x="10" y="16" textAnchor="middle" fontSize="15" fontWeight="700" stroke="none" fill="#2f86c8">R</text>],
  ["Python visual", <text x="10" y="14" textAnchor="middle" fontSize="14" fontWeight="700" stroke="none" fill="#2f86c8">Py</text>],
  ["Key influencers", <>{axes}<path d="M2 5.500h11" stroke="#2f86c8" /><circle cx="15.500" cy="4.500" r="2" fill={L} stroke={B} /><path d="M2 9.500h7 M2 14h4" stroke="#797775" /><path d="M9.500 8.500h3v3h-3z M6.500 12.500h3v3h-3z" fill={G} stroke="#797775" /></>],
  ["Decomposition tree", <><path d="M7 10.500h5 M9.500 4.500v12 M9.500 4.500h3 M9.500 16.500h3" /><path d="M1.500 8.500h5v4h-5z M12.500 1.500h6v4h-6z M12.500 8.500h6v4h-6z M12.500 14.500h6v4h-6z" fill={L} stroke={B} /></>],
  ["Q&A", <path d="M1.500 3.500h17v11H9l-4 4v-4H1.500z" fill="#fff" stroke={B} />],
  ["Smart narrative", <><path d="M3.500 6V1.500h9l4 4v13h-13V12 M12.500 1.500v4h4" /><path d="M8 9.500h6 M6 13.500h7" stroke={B} /><circle cx="4" cy="8.500" r="2" fill="#2f86c8" stroke="none" /></>],
  ["Metrics", <><path d="M5.500 2.500h9v5c0 3-2 5-4.500 5s-4.500-2-4.500-5z" fill="#fff" /><path d="M5 3.500H1.500v3l3 3 M15 3.500h3.500v3l-3 3 M10 12.500v3 M6.500 18.500v-3h7v3z" /></>],
  ["Paginated report", <><path d="M2.500 1.500h10l5 5v12h-15z" fill="#fff" stroke="#605e5c" strokeWidth="1.500" /><path d="M12.500 1.500v5h5" /><path d="M6 12v4 M9 14v2 M12 10v6 M14.500 8v8" strokeWidth="2" /></>],
  ["Card (new)", <><path d="M8 3.500h10.500v13h-17V12" fill="#fff" /><path d="M4 14.500h13" stroke="#797775" /><text x="11.500" y="12.500" textAnchor="middle" fontSize="8" stroke="none" fill="#2f86c8">123</text>{bolt}</>],
  ["Slicer (new)", <><path d="M11 18.500H1.500v-7 M8 1.500h10.500v7" /><path d="M8 1.500h10.500v3H8z" fill={G} /><path d="M5.500 12.500h3v3h-3z" fill={G} stroke="#605e5c" /><path d="M9.500 9.500h10l-4 4v5l-2-1v-4z" fill="#fff" />{bolt}</>],
  ["ArcGIS map", <><path d="M6 2.500h12.500V11 M1.500 10v8.500H12" stroke={B} /><path d="M12 3h6c0 4-3 4-4 6s-3 2-4 4-1 4-3 5H2v-4c4 0 5-2 6-4s4-4 4-7z" fill={L} stroke={B} strokeWidth=".8" /><path d="M4 11C2 8 .5 6 .5 3.500.5-1 7-1 7 3.500 7 6 5.500 8 4 11z M13 15h4v4h-4z" fill="#d8650f" stroke="none" /><circle cx="17.500" cy="12.500" r="1.800" fill="#d8650f" stroke="none" /><circle cx="3.700" cy="3.500" r="1.200" fill="#fff" stroke="none" /></>],
  ["Power Apps", <g stroke="#8a3a9a" strokeWidth="1.200"><path d="M10 1.500q1 0 2 1l5.500 5.500q2 2 0 4L12 17.500q-2 2-4 0L2.500 12q-2-2 0-4L8 2.500q1-1 2-1z" /><path d="M6 5l8.500 9 M14 5l-8.500 9 M10 9.500l4-4 3 4-3 4z M10 9.500l-4-4-3 4 3 4z" fill="#fff" fillOpacity=".6" /></g>],
  ["Power Automate", <g stroke="#0f7ad8" strokeWidth="1.200"><path d="M1.500 3.500h11l6 6.500-6 6.500h-11l6-6.500z M7 3.500l6 6.500-6 6.500 M3 16L14 5" /></g>],
  ["More visuals", <path d="M3 9h2v2H3z M9 9h2v2H9z M15 9h2v2h-2z" fill="#797060" stroke="none" />],
];

function DoubleChevron({ label }: { label: string }) {
  return (
    <button aria-label={label}>
      <svg width="13" height="13" viewBox="0 0 13 13" fill="none" stroke={K} strokeWidth="1.100"><path d="M1 1l5.500 5.500L1 12 M7 1l5.500 5.500L7 12" /></svg>
    </button>
  );
}

function DropZone({ text, inset = "pl-2" }: { text: string; inset?: string }) {
  return <button className={`block h-7 w-full rounded-sm border border-dashed border-[#c8c6c4] bg-white pt-0.5 text-left text-xs whitespace-nowrap text-[#252423] ${inset}`}>{text}</button>;
}

function Visualizations() {
  return (
    <aside className="flex w-[181px] shrink-0 flex-col border-l border-[#d8d6d4]" aria-label="Visualizations">
      <div className="flex h-[38px] items-center justify-between px-2">
        <h2 className="text-[15px] font-semibold text-[#252423]">Visualizations</h2>
        <DoubleChevron label="Collapse visualizations" />
      </div>
      <h3 className="h-[18px] pl-2 text-xs font-semibold text-[#3b3a39]">Build visual</h3>
      <div className="flex items-center gap-[34px] pl-2">
        <button aria-label="Build visual" className="flex size-8 items-center justify-center rounded-sm bg-[#d2d0ce]">
          <svg width="24" height="24" viewBox="0 0 24 24">
            <path d="M0 .5h19" stroke={K} />
            <path d="M.5 4.500h23v8H.5z M.5 15.500h23v8H.5z" fill={TEAL} stroke="#252423" strokeDasharray="2 1" />
          </svg>
        </button>
        <button aria-label="Format visual" className="flex size-8 items-center justify-center">
          <svg width="26" height="26" viewBox="0 0 26 26" fill="none" stroke={K}>
            <path d="M10 24.500H1.500v-23h11l5.500 6v4 M12.500 1.500v6H18" strokeWidth="1.200" />
            <path d="M25 9.500l-9 9-2-2 9-8z M14 16.500l2 2c0 3-2 5.500-7 6 2-2 1-6 5-8z" fill="#fff" />
          </svg>
        </button>
      </div>
      <svg viewBox="0 0 180 9" className="mt-[5px] w-full" fill="none" stroke="#8a8886" aria-hidden><path d="M0 8.500h17l7.500-7.500 7.500 7.500h148" /></svg>
      <div className="mt-1.5 grid grid-cols-[repeat(6,28px)] pl-1.5">
        {visualIcons.map(([name, art]) => (
          <button key={name} aria-label={name} title={name} className="flex size-7 items-center justify-center"><Icon>{art}</Icon></button>
        ))}
      </div>
      <div className="mt-1 border-t border-[#d8d6d4] px-1 pr-1.5">
        <h4 className="flex h-[30px] items-center pt-1 pl-2 text-xs text-[#3b3a39]">Values</h4>
        <DropZone text="Add data fields here" inset="pl-2.5" />
        <h4 className="flex h-[31px] items-center pt-1.5 pl-2 text-xs text-[#3b3a39]">Drill through</h4>
        <label className="flex h-[26px] items-center justify-between pr-4 pl-2 text-xs text-[#252423]">
          Cross-report
          <span className="flex h-4 w-8 items-center gap-0.5 rounded-full border border-[#605e5c] bg-white pl-1 text-[9px] text-[#3b3a39]">
            <input type="checkbox" className="size-2 shrink-0 appearance-none rounded-full bg-[#605e5c]" />Off
          </span>
        </label>
        <label className="flex h-7 items-center justify-between pr-4 pl-2 text-xs text-[#252423]">
          Keep all filters
          <span className="flex h-4 w-8 flex-row-reverse items-center gap-1 rounded-full bg-[#117865] pr-1 text-[9px] font-semibold text-white">
            <input type="checkbox" defaultChecked className="size-2 shrink-0 appearance-none rounded-full bg-white" />On
          </span>
        </label>
        <div className="mt-1"><DropZone text="Add drill-through fields here" /></div>
      </div>
    </aside>
  );
}

/* ---------- data pane ---------- */

function DataPane() {
  return (
    <aside className="w-[181px] shrink-0 border-l border-[#d8d6d4]" aria-label="Data">
      <div className="flex h-[38px] items-center justify-between px-2">
        <h2 className="text-[15px] font-semibold text-[#252423]">Data</h2>
        <DoubleChevron label="Collapse data" />
      </div>
      <label className="mx-1 mt-[7px] flex h-[27px] items-center gap-1.5 rounded-sm border border-[#605e5c] bg-[#f3f2f1] px-2">
        <Magnifier size={14} />
        <input aria-label="Search data" placeholder="Search" className="min-w-0 flex-1 pt-px text-xs outline-none placeholder:text-[#605e5c]" />
      </label>
      <ul className="mt-2.5 text-[11px] text-[#484644]">
        {["Global Terrorism", "Power BI Powered Glob..."].map((name) => (
          <li key={name}>
            <button className="flex h-6 w-full items-center gap-1.5 pl-2.5 text-left whitespace-nowrap">
              <svg width="7" height="12" viewBox="0 0 7 12" fill="none" stroke="#797775" className="shrink-0" aria-hidden><path d="M.5.5L6 6 .5 11.500" /></svg>
              <svg width="12" height="12" viewBox="0 0 12 12" fill="none" stroke={K} className="shrink-0" aria-hidden><rect x=".5" y=".5" width="11" height="11" rx="2" /><path d="M.5 4h11 M.5 8h11 M4 .5v11 M8 .5v11" /></svg>
              {name}
            </button>
          </li>
        ))}
      </ul>
    </aside>
  );
}

/* ---------- bottom bars ---------- */

function PageTabs() {
  return (
    <div className="flex h-[35px] items-stretch">
      <button aria-label="Desktop layout" className="ml-2.5 flex w-6 flex-col items-center justify-end gap-1.5 pb-[5px]">
        <svg width="20" height="15" viewBox="0 0 20 15" fill="none" stroke={K} strokeWidth="1.200"><path d="M1 1h18v10.500H1z M10 11.500v3 M6 14.200h8" /></svg>
        <span className="h-[3px] w-6 rounded bg-[#117865]" />
      </button>
      <button aria-label="Mobile layout" className="ml-[25px] flex items-center pb-1.5">
        <svg width="14" height="20" viewBox="0 0 14 20" fill="none" stroke={K} strokeWidth="1.200"><rect x="1" y="1" width="12" height="18" rx="1" /><path d="M6 16.500h2.500" /></svg>
      </button>
      <button aria-label="Previous page" className="ml-5"><svg width="6" height="8" viewBox="0 0 6 8" fill="#c0bebc"><path d="M5 0v8L1 4z" /></svg></button>
      <button aria-label="Next page" className="ml-4"><svg width="6" height="8" viewBox="0 0 6 8" fill="#c0bebc"><path d="M1 0v8l4-4z" /></svg></button>
      <button className="ml-1.5 w-[77px] border-x border-b-[3px] border-x-[#a19f9d] border-b-[#117865] bg-white pt-1 text-xs font-medium text-[#252423]">Page 1</button>
      <button aria-label="New page" className="mt-0.5 mb-px flex w-[39px] items-center justify-center bg-[#117865]">
        <svg width="12" height="12" viewBox="0 0 12 12" stroke="#fff" strokeWidth="3"><path d="M6 .5v11 M.5 6h11" /></svg>
      </button>
    </div>
  );
}

function StatusBar() {
  return (
    <footer className="flex h-[25px] items-center border-t border-b-2 border-t-[#dddbd9] border-b-[#174a7a] px-1 pt-1 text-xs text-[#484644]">
      <span>Page 1 of 1</span>
      <div className="ml-auto flex items-center">
        <button aria-label="Zoom out" className="w-3">-</button>
        <input
          type="range" aria-label="Zoom" defaultValue={27}
          className="h-3 w-24 appearance-none bg-[linear-gradient(#605e5c,#605e5c)] bg-[length:100%_1px] bg-center bg-no-repeat [&::-webkit-slider-thumb]:h-3 [&::-webkit-slider-thumb]:w-1 [&::-webkit-slider-thumb]:appearance-none [&::-webkit-slider-thumb]:bg-[#3b3a39]"
        />
        <button aria-label="Zoom in" className="ml-2 text-sm">+</button>
        <span className="ml-3 text-xs">61%</span>
        <button aria-label="Fit to page" className="ml-[19px]">
          <svg width="17" height="12" viewBox="0 0 17 12" fill="none" stroke={K}><path d="M.5.5h16v11H.5z" /><path d="M3 5V3h2.500 M11.500 3H14v2 M14 7v2h-2.500 M5.500 9H3V7" stroke="#3a8a3a" /></svg>
        </button>
        <a href="#update" className="ml-1 whitespace-nowrap">Update available (click to download)</a>
      </div>
    </footer>
  );
}

export default function App() {
  return (
    <div className="flex min-h-screen flex-col bg-[#f3f2f1] font-['Open_Sans','Noto_Sans',sans-serif]">
      <TitleBar />
      <div className="z-20 bg-[#fafafa] shadow-[0_1px_3px_rgba(0,0,0,.3)]">
        <MenuTabs />
        <Ribbon />
      </div>
      <div className="flex flex-1">
        <Rail />
        <div className="flex min-w-0 flex-1 flex-col">
          <div className="flex h-9 items-center text-[11px] text-[#3b3a39]">
            <svg width="16" height="16" viewBox="0 0 16 16" fill="none" stroke="#4b3a55" className="mr-2 ml-3" aria-hidden><circle cx="8" cy="8" r="7" /><path d="M8 6.500v5 M8 4v1.300" /></svg>
            <p className="pt-0.5">Auto recovery contains some recovered files that haven't been opened.</p>
            <button className="ml-auto flex h-6 w-[161px] items-center justify-center border border-[#8a8886] bg-white pt-0.5 text-[13px] font-semibold text-[#252423]">View recovered files</button>
            <button aria-label="Dismiss" className="mx-2.5">
              <svg width="12" height="12" viewBox="0 0 12 12" stroke={K} strokeWidth="1.100"><path d="M.5.5l11 11 M11.500.5l-11 11" /></svg>
            </button>
          </div>
          <div className="flex flex-1">
            <Canvas />
            <Filters />
          </div>
          <PageTabs />
        </div>
        <Visualizations />
        <DataPane />
      </div>
      <StatusBar />
    </div>
  );
}
